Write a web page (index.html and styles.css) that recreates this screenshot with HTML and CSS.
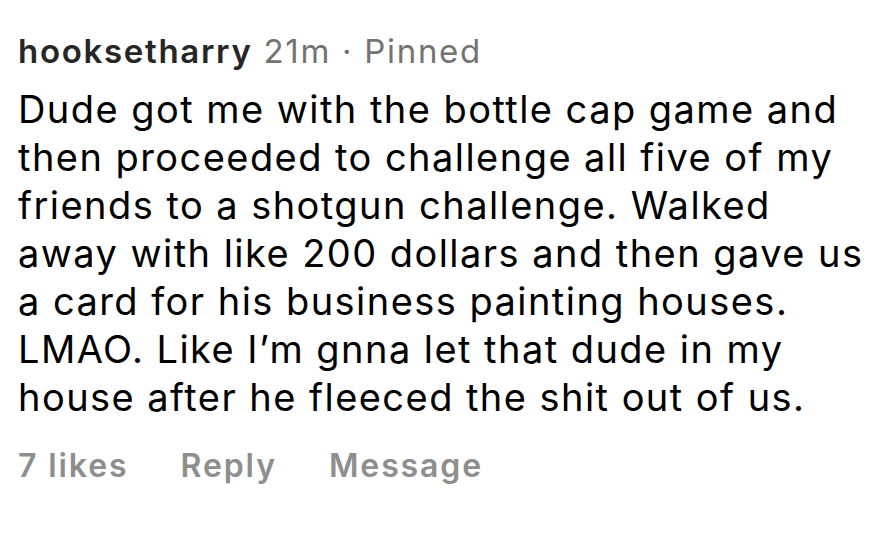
FILE: index.html
```html
<!DOCTYPE html>
<html>
<head>
<meta charset="utf-8">
<link rel="stylesheet" href="styles.css">
</head>
<body>
<div class="comment">
  <div class="head"><span class="user">hooksetharry</span> <span class="meta">21m · Pinned</span></div>
  <p class="text">Dude got me with the bottle cap game and<br>then proceeded to challenge all five of my<br>friends to a shotgun challenge. Walked<br>away with like 200 dollars and then gave us<br>a card for his business painting houses.<br>LMAO. Like I’m gnna let that dude in my<br>house after he fleeced the shit out of us.</p>
  <div class="actions"><span>7 likes</span><span>Reply</span><span>Message</span></div>
</div>
</body>
</html>
```
FILE: styles.css
```css
html, body { margin: 0; padding: 0; background: #fff; }
body { width: 884px; height: 555px; overflow: hidden; font-family: Inter, "Noto Sans", sans-serif; }
.comment { padding: 31px 0 0 18px; }
.head { font-size: 33px; line-height: 40px; color: #737373; letter-spacing: 1.7px; }
.user { font-weight: 600; color: #262626; }
.text { margin: 14px 0 0; font-size: 38px; line-height: 48px; color: #000; letter-spacing: 1.45px; }
.actions { margin-top: 25px; display: flex; gap: 52px; font-size: 32px; line-height: 40px; font-weight: 600; color: #8e8e8e; letter-spacing: 1.9px; }
```
